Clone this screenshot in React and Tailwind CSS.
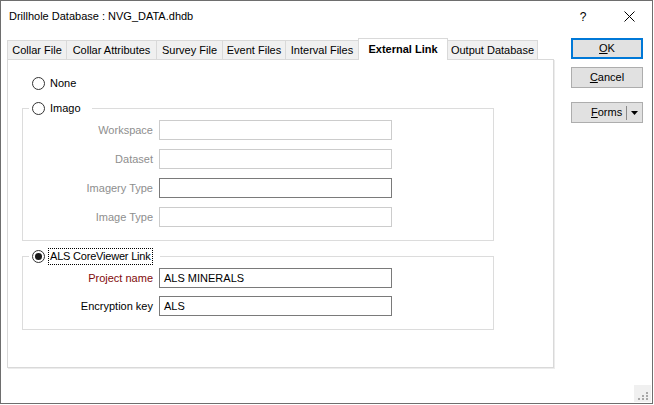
import React from "react";

function Radio({ checked }) {
  return (
    <span className="w-[13px] h-[13px] rounded-full border border-[#333333] bg-white flex items-center justify-center shrink-0">
      {checked && <span className="w-[7px] h-[7px] rounded-full bg-[#1a1a1a]" />}
    </span>
  );
}

function Field({ label, value, dark, labelClass }) {
  return (
    <div className="flex items-center h-[20px]">
      <div className={"w-[130px] text-right text-[11px] " + labelClass}>{label}</div>
      <div
        className={
          "ml-[6px] w-[233px] h-[20px] border bg-white flex items-center pl-[4px] text-[11px] " +
          (dark ? "border-[#7a7a7a]" : "border-[#cccccc]")
        }
      >
        {value}
      </div>
    </div>
  );
}

function Tab({ label, w }) {
  return (
    <div
      className={
        "h-[19px] -ml-px first:ml-0 border border-b-0 border-[#d9d9d9] bg-[#f0f0f0] flex items-center justify-center whitespace-nowrap " +
        w
      }
    >
      {label}
    </div>
  );
}

function Button({ children, primary }) {
  return (
    <div
      className={
        "w-[72px] h-[21px] bg-[#e1e1e1] flex items-center justify-center " +
        (primary ? "border-2 border-[#0078d7]" : "border border-[#adadad]")
      }
    >
      {children}
    </div>
  );
}

export default function App() {
  return (
    <div className="w-[653px] h-[404px] bg-white border border-[#6e6e6e] relative flex flex-col font-['Liberation_Sans',Arial,sans-serif] text-[11px] text-black">
      {/* Title bar */}
      <div className="h-[31px] flex items-center pl-[8px] shrink-0">
        <span className="text-[11px]">Drillhole Database : NVG_DATA.dhdb</span>
        <div className="ml-auto flex items-center h-full">
          <span className="w-[46px] text-center text-[12px]">?</span>
          <span className="w-[46px] flex justify-center">
            <svg width="11" height="11" viewBox="0 0 11 11">
              <path d="M0.5 0.5 L10.5 10.5 M10.5 0.5 L0.5 10.5" stroke="#000" strokeWidth="1" fill="none" />
            </svg>
          </span>
        </div>
      </div>

      {/* Body */}
      <div className="flex pt-[6px] pl-[6px]">
        {/* Left: tabs + panel */}
        <div className="w-[548px] flex flex-col">
          <div className="h-[21px] flex items-end">
            <Tab label="Collar File" w="w-[60px]" />
            <Tab label="Collar Attributes" w="w-[91px]" />
            <Tab label="Survey File" w="w-[67px]" />
            <Tab label="Event Files" w="w-[64px]" />
            <Tab label="Interval Files" w="w-[74px]" />
            <div className="relative z-10 w-[90px] h-[22px] -mb-px -ml-px border border-b-0 border-[#d9d9d9] bg-white flex items-center justify-center font-bold whitespace-nowrap">
              External Link
            </div>
            <Tab label="Output Database" w="w-[91px]" />
          </div>

          <div className="w-[547px] h-[309px] border border-[#d9d9d9] shadow-[1px_1px_0_#ececec] bg-white flex flex-col">
            {/* None */}
            <div className="h-[13px] mt-[17px] ml-[24px] flex items-center">
              <Radio />
              <span className="ml-[5px]">None</span>
            </div>

            {/* Imago group */}
            <div className="mt-[18px] ml-[14px] w-[472px] h-[133px] border border-[#dcdcdc] flex flex-col">
              <div className="-mt-[7px] ml-[6px] self-start h-[13px] flex items-center bg-white pl-[3px] pr-[11px]">
                <Radio />
                <span className="ml-[5px]">Imago</span>
              </div>
              <div className="mt-[5px] flex flex-col gap-[9px]">
                <Field label="Workspace" labelClass="text-[#8e8e8e]" />
                <Field label="Dataset" labelClass="text-[#8e8e8e]" />
                <Field label="Imagery Type" labelClass="text-[#8e8e8e]" dark />
                <Field label="Image Type" labelClass="text-[#8e8e8e]" />
              </div>
            </div>

            {/* ALS group */}
            <div className="mt-[15px] ml-[14px] w-[472px] h-[74px] border border-[#dcdcdc] flex flex-col">
              <div className="-mt-[9px] ml-[6px] self-start h-[17px] flex items-center bg-white pl-[3px] pr-[7px]">
                <Radio checked />
                <span className="ml-[3px] h-[17px] px-[1px] flex items-center border border-dotted border-black tracking-[-0.2px]">
                  ALS CoreViewer Link
                </span>
              </div>
              <div className="mt-[3px] flex flex-col gap-[8px]">
                <Field label="Project name" value="ALS MINERALS" labelClass="text-[#7f0a0a]" dark />
                <Field label="Encryption key" value="ALS" labelClass="text-black" dark />
              </div>
            </div>
          </div>
        </div>

        {/* Right: buttons */}
        <div className="ml-[16px] flex flex-col">
          <Button primary>
            <span><span className="underline">O</span>K</span>
          </Button>
          <div className="mt-[8px]">
            <Button>
              <span><span className="underline">C</span>ancel</span>
            </Button>
          </div>
          <div className="mt-[14px] w-[72px] h-[21px] bg-[#e1e1e1] border border-[#adadad] flex items-center">
            <span className="ml-[19px]"><span className="underline">F</span>orms</span>
            <span className="ml-auto w-px h-[14px] bg-[#8a8a8a]" />
            <span className="w-[15px] flex justify-center">
              <svg width="7" height="4" viewBox="0 0 7 4">
                <path d="M0 0 L7 0 L3.5 4 Z" fill="#000" />
              </svg>
            </span>
          </div>
        </div>
      </div>

      {/* Resize grip */}
      <div className="absolute right-[1px] bottom-[1px] w-[17px] h-[17px] bg-[#f0f0f0]">
        <svg width="17" height="17" viewBox="0 0 17 17">
          <rect x="12" y="7" width="2" height="2" fill="#a8a8a8" />
          <rect x="8" y="10" width="2" height="2" fill="#a8a8a8" />
          <rect x="12" y="10" width="2" height="2" fill="#a8a8a8" />
          <rect x="4" y="13" width="2" height="2" fill="#a8a8a8" />
          <rect x="8" y="13" width="2" height="2" fill="#a8a8a8" />
          <rect x="12" y="13" width="2" height="2" fill="#a8a8a8" />
        </svg>
      </div>
    </div>
  );
}
